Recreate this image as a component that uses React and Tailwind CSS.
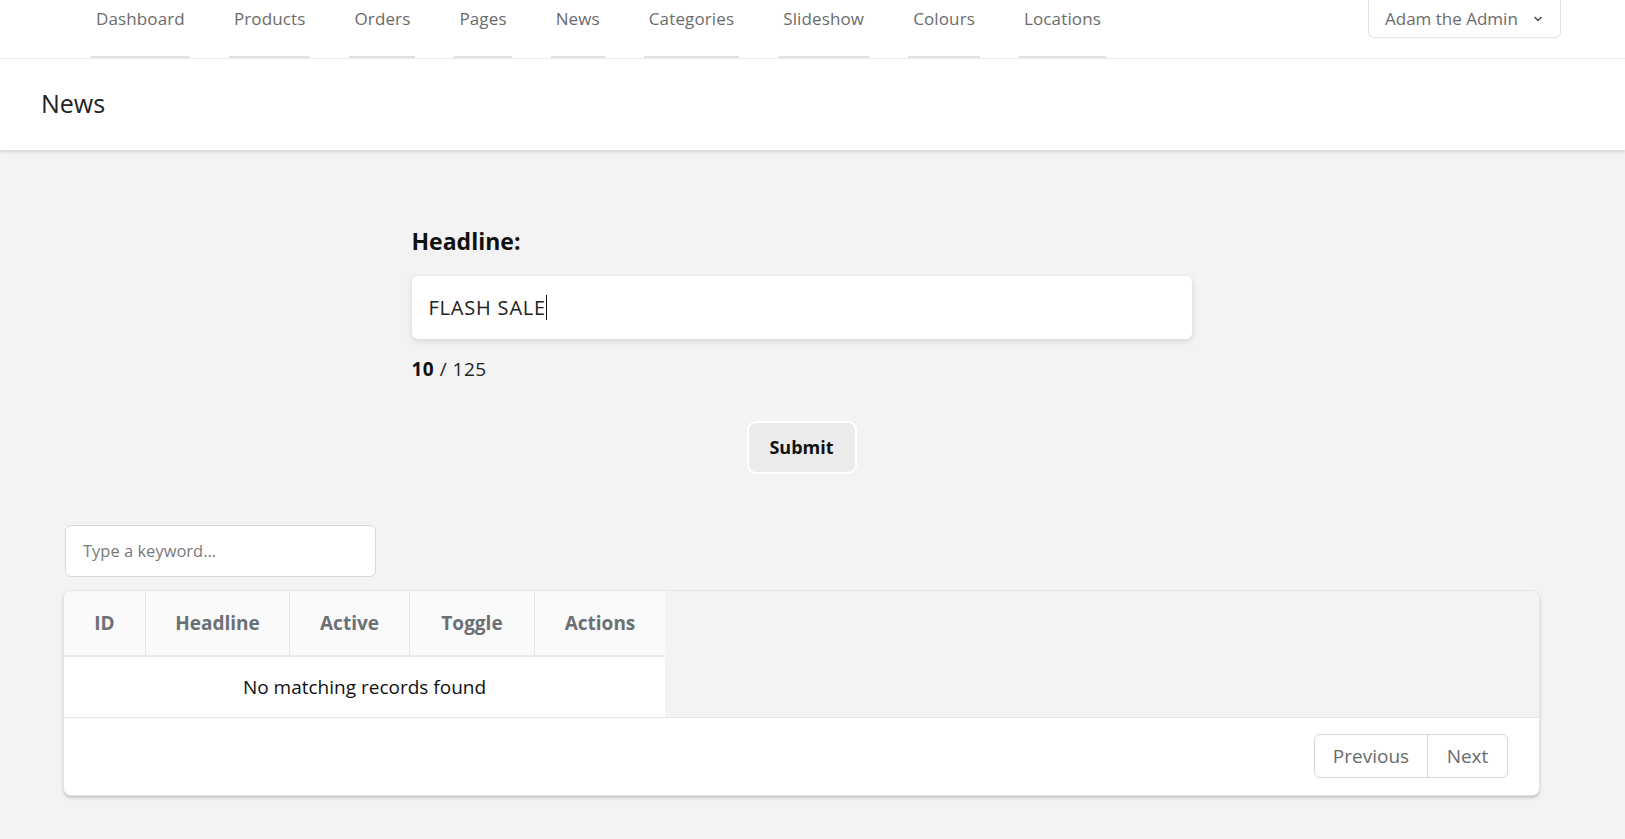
import React from "react";

const navItems = ["Dashboard", "Products", "Orders", "Pages", "News", "Categories", "Slideshow", "Colours", "Locations"];

export default function App() {
  return (
    <div className="min-h-screen bg-[#f3f3f3] font-['Open_Sans',sans-serif] overflow-hidden">
      {/* top nav */}
      <div className="h-[59px] bg-white border-b border-[#ececec] flex items-start">
        <nav className="flex gap-[39px] pl-[91px] h-[58px]">
          {navItems.map((n) => (
            <div key={n} className="h-[58px] px-[5px] border-b-2 border-[#e2e2e2] pt-[6px] text-[17px] tracking-[0.13px] leading-[26px] text-[#6b6b6b]">
              {n}
            </div>
          ))}
        </nav>
        <div className="ml-auto mr-[64px] -mt-[8px] h-[46px] w-[193px] rounded-[6px] border border-[#e3e3e3] flex items-center pl-[16px] pt-[8px] text-[17px] text-[#6b6b6b]">
          <span>Adam the Admin</span>
          <svg className="ml-[14px]" width="12" height="12" viewBox="0 0 24 24" fill="none" stroke="#555" strokeWidth="3.5" strokeLinecap="round" strokeLinejoin="round">
            <path d="M6 9l6 6 6-6" />
          </svg>
        </div>
      </div>

      {/* page header */}
      <div className="h-[91px] bg-white shadow-[0_2px_3px_rgba(0,0,0,0.12)] flex items-center pl-[41px] pb-[4px] relative">
        <h1 className="text-[25px] leading-[32px] text-[#222]">News</h1>
      </div>

      {/* main */}
      <div className="pl-[63px] pr-[85px]">
        <div className="w-[780px] mx-auto">
          <label className="block mt-[76px] text-[23px] leading-[30px] font-bold text-[#111]">Headline:</label>
          <div className="mt-[20px] h-[63px] bg-white rounded-[6px] shadow-[0_2px_6px_rgba(0,0,0,0.13)] flex items-center px-[17px] text-[20px] tracking-[0.8px] text-[#222]">
            <span>FLASH SALE</span>
            <span className="w-px h-[25px] bg-[#111]" />
          </div>
          <div className="mt-[18px] text-[19px] tracking-[0.5px] leading-[24px] text-[#222]">
            <span className="font-bold text-[#111]">10</span> / 125
          </div>
          <div className="mt-[40px] flex justify-center">
            <button className="w-[110px] h-[53px] bg-[#ebebeb] border-2 border-white rounded-[9px] text-[18px] font-bold text-[#111]">
              Submit
            </button>
          </div>
        </div>

        <div className="mt-[51px] ml-[2px] w-[311px] h-[52px] bg-white border border-[#d8d8d8] rounded-[6px] flex items-center px-[17px] text-[16.5px] text-[#7a7a7a]">
          Type a keyword...
        </div>

        <div className="mt-[13px] rounded-[8px] bg-white border border-[#e4e4e4] shadow-[0_2px_3px_rgba(0,0,0,0.18)] overflow-hidden">
          <div className="flex bg-[#f3f3f3]">
            <div className="w-[601px] flex flex-col">
              <div className="flex h-[66px] bg-[#fafafa] border-b-2 border-[#e9e9e9] text-[19px] font-bold text-[#6b7075]">
                <div className="w-[82px] flex items-center justify-center border-r border-[#e6e6e6]">ID</div>
                <div className="w-[144px] flex items-center justify-center border-r border-[#e6e6e6]">Headline</div>
                <div className="w-[120px] flex items-center justify-center border-r border-[#e6e6e6]">Active</div>
                <div className="w-[125px] flex items-center justify-center border-r border-[#e6e6e6]">Toggle</div>
                <div className="w-[130px] flex items-center justify-center">Actions</div>
              </div>
              <div className="h-[60px] bg-white flex items-center justify-center text-[19px] text-[#111]">
                No matching records found
              </div>
            </div>
          </div>
          <div className="border-t border-[#e4e4e4] h-[78px] flex items-center justify-end pr-[31px] pb-[1px]">
            <div className="flex h-[44px] border border-[#d6d6d6] rounded-[6px] text-[19px] text-[#6b6b6b]">
              <div className="w-[113px] flex items-center justify-center border-r border-[#d6d6d6]">Previous</div>
              <div className="w-[79px] flex items-center justify-center">Next</div>
            </div>
          </div>
        </div>
      </div>
    </div>
  );
}
